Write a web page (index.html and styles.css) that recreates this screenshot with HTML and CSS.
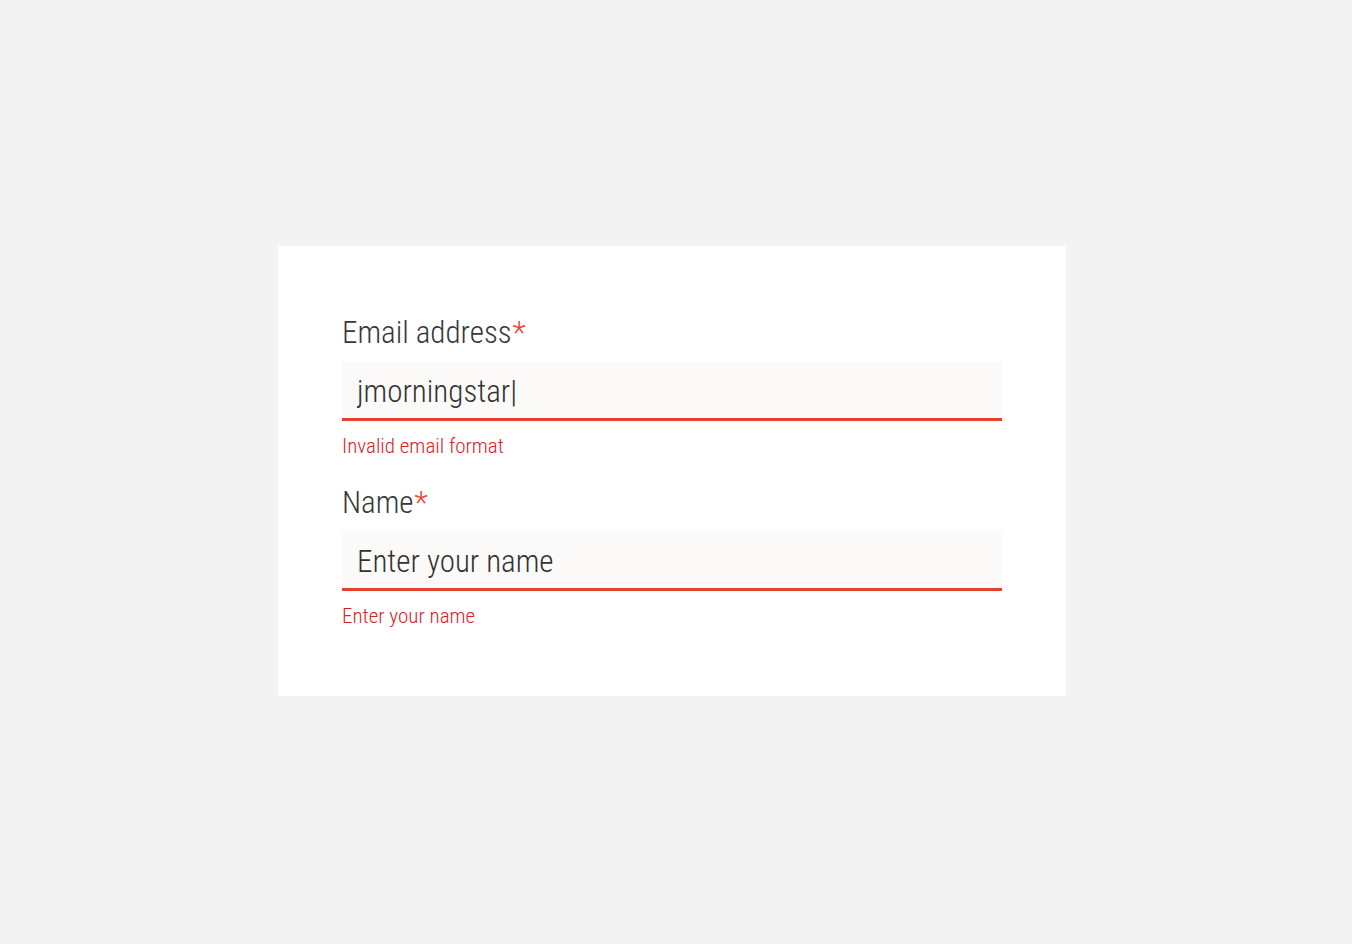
FILE: index.html
```html
<!DOCTYPE html>
<html lang="en">
    <head>
        <meta charset="UTF-8">
        <meta name="viewport" content="width=device-width, initial-scale=1.0">
        <title>Contact form</title>
        <link rel="stylesheet" href="styles.css">
    </head>
<body>
    <div class="page">
        <form class="card">
            <div class="field">
                <label for="email">Email address<span class="req">*</span></label>
                <input type="text" id="email" class="invalid" value="jmorningstar|">
                <div class="error">Invalid email format</div>
            </div>

            <div class="field">
                <label for="name">Name<span class="req">*</span></label>
                <input type="text" id="name" class="invalid" placeholder="Enter your name">
                <div class="error">Enter your name</div>
            </div>
        </form>
    </div>
</body>
</html>
```

FILE: styles.css
```css
html, body {
    margin: 0;
    padding: 0;
}
body {
    font-family: "Roboto Condensed", Roboto, sans-serif;
    font-stretch: condensed;
    font-weight: 300;
    background-color: #f3f3f3;
    color: #333;
}
.page {
    min-height: 944px;
    display: flex;
    justify-content: center;
    align-items: flex-start;
    padding-top: 246px;
    padding-right: 8px;
    box-sizing: border-box;
}
.card {
    width: 788px;
    box-sizing: border-box;
    background-color: #fff;
    padding: 68px 64px 66px;
    display: flex;
    flex-direction: column;
    gap: 24px;
}
.field {
    display: flex;
    flex-direction: column;
}
label {
    font-size: 31px;
    line-height: 38px;
    color: #383838;
    margin-bottom: 10px;
}
.req {
    color: #e8473a;
    margin-left: 1px;
}
input {
    font-family: inherit;
    font-stretch: inherit;
    font-weight: inherit;
    font-size: 31px;
    color: #333;
    height: 59px;
    box-sizing: border-box;
    padding: 3px 15px 0;
    border: none;
    border-bottom: 3px solid #e5412f;
    background-color: #fbfaf9;
    outline: none;
}
input::placeholder {
    color: #333;
    opacity: 1;
}
.error {
    font-size: 21px;
    line-height: 28px;
    color: #d9222a;
    margin-top: 11px;
}
```
